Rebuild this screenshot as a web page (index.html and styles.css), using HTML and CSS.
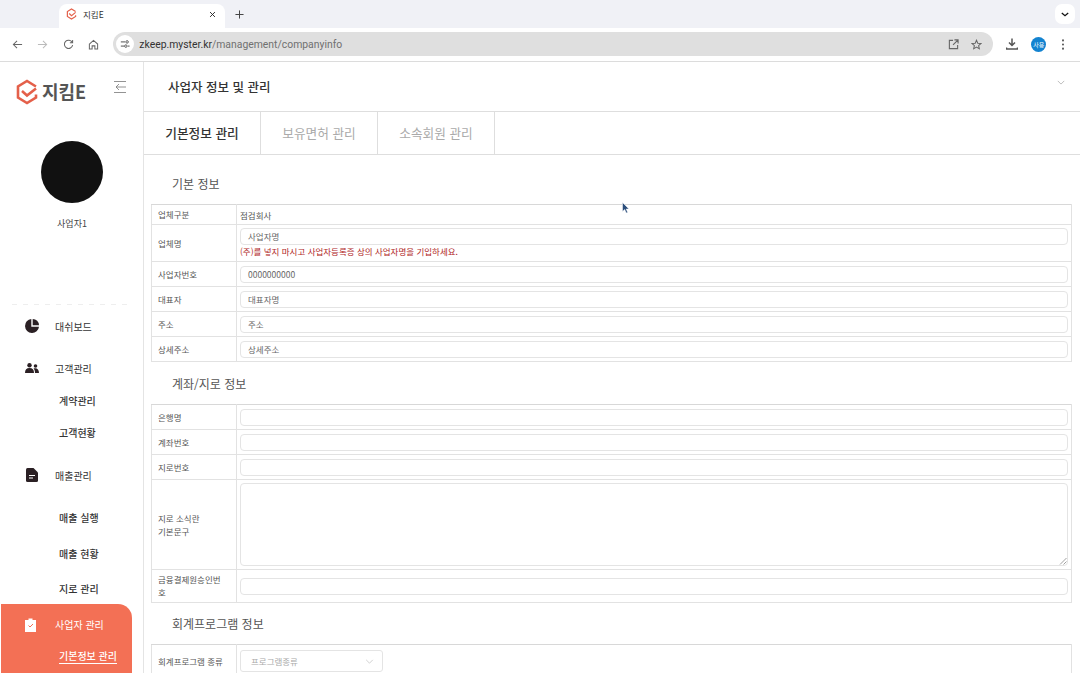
FILE: index.html
```html
<!DOCTYPE html>
<html lang="ko">
<head>
    <meta charset="UTF-8">
    <title>지킴E</title>
    <link rel="stylesheet" href="styles.css">
</head>
<body>
    <div class="tabstrip">
        <div class="tab">
            <svg class="tab-logo" viewBox="0 0 24 26"><path d="M21 7.500 12 2 3 7.500v11L12 24l9-5.500v-3" fill="none" stroke="#e4604a" stroke-width="2.600"/><path d="M7 12l5 4.500 9-7" fill="none" stroke="#e4604a" stroke-width="2.600"/></svg>
            <span class="tab-title">지킴E</span>
            <svg class="tab-close" viewBox="0 0 10 10"><path d="M1.500 1.500l7 7M8.500 1.500l-7 7" stroke="#222" stroke-width="1.300"/></svg>
        </div>
        <svg class="tab-new" viewBox="0 0 10 10"><path d="M5 .5v9M.5 5h9" stroke="#444" stroke-width="1.100"/></svg>
        <div class="tab-search">
            <svg viewBox="0 0 10 6" width="8" height="5"><path d="M1 1l4 3.500L9 1" fill="none" stroke="#111" stroke-width="1.600"/></svg>
        </div>
    </div>

    <div class="toolbar">
        <svg class="nav-icon" viewBox="0 0 12 12"><path d="M11 6H1.500M5.500 2 1.500 6l4 4" fill="none" stroke="#666" stroke-width="1.100"/></svg>
        <svg class="nav-icon" viewBox="0 0 12 12"><path d="M1 6h9.500M6.500 2l4 4-4 4" fill="none" stroke="#bbb" stroke-width="1.100"/></svg>
        <svg class="nav-icon" viewBox="0 0 12 12"><path d="M10 3.600A4.500 4.500 0 1 0 10.500 6.500M10.500 1v3h-3" fill="none" stroke="#666" stroke-width="1.100"/></svg>
        <svg class="nav-icon" viewBox="0 0 12 12"><path d="M1.500 5.500 6 1.500l4.500 4v5.500H7.500V7.500h-3V11H1.500z" fill="none" stroke="#666" stroke-width="1.100"/></svg>
        <div class="omnibox">
            <span class="site-btn">
                <svg viewBox="0 0 12 12" width="10" height="10"><path d="M1 3.500h5M9.500 8.500h2M1 8.500h4" stroke="#444" stroke-width="1.100"/><circle cx="8.500" cy="3.500" r="1.500" fill="none" stroke="#444"/><circle cx="7" cy="8.500" r="1.500" fill="none" stroke="#444"/></svg>
            </span>
            <span class="url"><b>zkeep.myster.kr</b>/management/companyinfo</span>
            <svg class="omni-icon" viewBox="0 0 12 12"><path d="M5.500 1.500H1.500v9h9V6.500M7 1h4v4M11 1 5.500 6.500" fill="none" stroke="#666" stroke-width="1.200"/></svg>
            <svg class="omni-icon" viewBox="0 0 12 12"><path d="M6 1.300 7.400 4.600l3.600.3-2.700 2.300.8 3.500L6 8.800l-3.100 1.900.8-3.500L1 4.900l3.600-.3z" fill="none" stroke="#666" stroke-width="1.100"/></svg>
        </div>
        <svg class="tool-icon" viewBox="0 0 12 12"><path d="M6 .5v6.500M3 4.500 6 7.500l3-3" fill="none" stroke="#555" stroke-width="1.500"/><path d="M.5 9.500v1.500h11V9.500" fill="none" stroke="#555" stroke-width="1.500"/></svg>
        <span class="profile">사용</span>
        <svg class="tool-dots" viewBox="0 0 4 12"><circle cx="2" cy="1.500" r="1.100" fill="#555"/><circle cx="2" cy="6" r="1.100" fill="#555"/><circle cx="2" cy="10.500" r="1.100" fill="#555"/></svg>
    </div>

    <div class="app">
        <aside class="sidebar">
            <div class="brand">
                <svg class="brand-mark" viewBox="0 0 24 26"><path d="M21 7.500 12 2 3 7.500v11L12 24l9-5.500v-3" fill="none" stroke="#e4604a" stroke-width="2.600"/><path d="M7 12l5 4.500 9-7" fill="none" stroke="#e4604a" stroke-width="2.600"/></svg>
                <span class="brand-name">지킴E</span>
                <svg class="collapse" viewBox="0 0 12 12"><path d="M0 .5h12M0 11.500h12M12 6H2M5 3 2 6l3 3" fill="none" stroke="#777" stroke-width=".8"/></svg>
            </div>
            <div class="avatar"></div>
            <div class="user-name">사업자1</div>
            <nav class="menu">
                <a class="menu-item">
                    <svg class="menu-icon" viewBox="0 0 14 14"><path d="M6.300 0v7.700h7.700A7 7 0 1 1 6.300 0zM7.700 0A6.300 6.300 0 0 1 14 6.300H7.700z" fill="#2b2024"/></svg>
                    대쉬보드
                </a>
                <a class="menu-item menu-customers">
                    <svg class="menu-icon" viewBox="0 0 14 10"><circle cx="4.500" cy="2.300" r="2.200" fill="#2b2024"/><circle cx="10.500" cy="3" r="1.800" fill="#2b2024"/><path d="M0 10c0-3.500 1.500-5 4.500-5s4.500 1.500 4.500 5zM10 10c0-2-.4-3.500-1.500-4.500 3-1 5.500.5 5.500 4.500z" fill="#2b2024"/></svg>
                    고객관리
                </a>
                <a class="sub-item">계약관리</a>
                <a class="sub-item">고객현황</a>
                <a class="menu-item menu-sales">
                    <svg class="menu-icon" viewBox="0 0 12 14"><path d="M0 1.500Q0 0 1.500 0H7.500L12 4.500V12.500Q12 14 10.500 14H1.500Q0 14 0 12.500z" fill="#2b2024"/><path d="M3 7.500h6M3 10h4" stroke="#fff" stroke-width="1"/></svg>
                    매출관리
                </a>
                <a class="sub-item wide">매출 실행</a>
                <a class="sub-item wide">매출 현황</a>
                <a class="sub-item wide">지로 관리</a>
                <div class="menu-active">
                    <a class="menu-item">
                        <svg class="menu-icon" viewBox="0 0 11 14"><path d="M0 2h3.500V.500h4V2H11v12H0z" fill="#fff"/><path d="M3.500 7.500 5 9l3-3" fill="none" stroke="#f37055" stroke-width="1"/></svg>
                        사업자 관리
                    </a>
                    <a class="sub-item current"><span>기본정보 관리</span></a>
                </div>
            </nav>
        </aside>

        <main class="content">
            <header class="page-head">
                <h1>사업자 정보 및 관리</h1>
                <svg class="head-toggle" viewBox="0 0 10 6"><path d="M1 1l4 4 4-4" fill="none" stroke="#999" stroke-width=".8"/></svg>
            </header>
            <div class="tabs">
                <div class="tabs-item active">기본정보 관리</div>
                <div class="tabs-item">보유면허 관리</div>
                <div class="tabs-item">소속회원 관리</div>
            </div>

            <section class="form-area">
                <h2>기본 정보</h2>
                <table class="info">
                    <tr class="h20"><th>업체구분</th><td>점검회사</td></tr>
                    <tr class="h37">
                        <th>업체명</th>
                        <td class="name-cell">
                            <div class="field">사업자명</div>
                            <p class="notice">(주)를 넣지 마시고 사업자등록증 상의 사업자명을 기입하세요.</p>
                        </td>
                    </tr>
                    <tr><th>사업자번호</th><td><div class="field">0000000000</div></td></tr>
                    <tr><th>대표자</th><td><div class="field">대표자명</div></td></tr>
                    <tr><th>주소</th><td><div class="field">주소</div></td></tr>
                    <tr><th>상세주소</th><td><div class="field">상세주소</div></td></tr>
                </table>

                <h2 class="title-mid">계좌/지로 정보</h2>
                <table class="info">
                    <tr><th>은행명</th><td><div class="field"></div></td></tr>
                    <tr><th>계좌번호</th><td><div class="field"></div></td></tr>
                    <tr><th>지로번호</th><td><div class="field"></div></td></tr>
                    <tr class="h90">
                        <th>지로 소식란<br>기본문구</th>
                        <td>
                            <div class="field area">
                                <svg class="grip" viewBox="0 0 8 8"><path d="M7.500 1 1 7.500M7.500 4.500 4.500 7.500" stroke="#888" stroke-width=".8"/></svg>
                            </div>
                        </td>
                    </tr>
                    <tr class="h33"><th>금융결제원승인번호</th><td><div class="field"></div></td></tr>
                </table>

                <h2 class="title-last">회계프로그램 정보</h2>
                <table class="info">
                    <tr class="h33">
                        <th>회계프로그램 종류</th>
                        <td>
                            <div class="select">
                                프로그램종류
                                <svg viewBox="0 0 10 6" width="9" height="5"><path d="M1 1l4 4 4-4" fill="none" stroke="#bbb" stroke-width=".8"/></svg>
                            </div>
                        </td>
                    </tr>
                </table>
            </section>
        </main>
    </div>

    <svg class="cursor" viewBox="0 0 8 12"><path d="M.5.500v9l2.200-2 1.500 3.500 1.500-.6L4.200 7H7z" fill="#2c4f7c" stroke="#fff" stroke-width=".5"/></svg>
</body>
</html>
```

FILE: styles.css
```css
* {
    box-sizing: border-box;
}

html, body {
    margin: 0;
    padding: 0;
    height: 100%;
    overflow: hidden;
}

body {
    display: flex;
    flex-direction: column;
    font-family: "Noto Sans CJK KR", "Noto Sans", sans-serif;
    color: #333;
    background-color: #fff;
}

/* Browser window */
.tabstrip {
    height: 28px;
    flex: none;
    display: flex;
    align-items: flex-end;
    background-color: #f0f1f6;
    padding-left: 59px;
}

.tab {
    width: 166px;
    height: 24px;
    display: flex;
    align-items: center;
    padding: 0 17px 4px 7px;
    background-color: #fff;
    border-radius: 8px 8px 0 0;
}

.tab-logo {
    width: 11px;
    height: 12px;
}

.tab-title {
    margin-left: 6px;
    font-size: 8.500px;
    color: #333;
    flex: 1;
}

.tab-close {
    width: 7px;
    height: 7px;
    margin-right: -8px;
}

.tab-new {
    width: 9px;
    height: 9px;
    margin: 0 0 9px 10px;
}

.tab-search {
    margin: 0 5px 4px auto;
    width: 20px;
    height: 20px;
    display: flex;
    align-items: center;
    justify-content: center;
    background-color: #fff;
    border-radius: 7px;
}

.toolbar {
    height: 34px;
    flex: none;
    display: flex;
    align-items: center;
    background-color: #fff;
    border-bottom: 1px solid #dcdcdc;
    border-radius: 8px 8px 0 0;
    padding: 0 0 1px 12px;
}

.nav-icon {
    width: 11px;
    height: 11px;
    margin-right: 14.330px;
}

.omnibox {
    width: 880px;
    height: 24px;
    display: flex;
    align-items: center;
    background-color: #dfdfdf;
    border-radius: 12px;
    padding: 0 11px 0 3px;
}

.site-btn {
    width: 18px;
    height: 18px;
    display: flex;
    align-items: center;
    justify-content: center;
    background-color: #fff;
    border-radius: 50%;
}

.url {
    flex: 1;
    margin-left: 5px;
    font-family: "Roboto", sans-serif;
    font-size: 10.400px;
    color: #707070;
}

.url b {
    font-weight: 400;
    color: #333;
}

.omni-icon {
    width: 11px;
    height: 11px;
    margin-left: 12px;
}

.tool-icon {
    width: 12px;
    height: 12px;
    margin-left: 13px;
}

.profile {
    width: 15px;
    height: 15px;
    margin-left: 13px;
    display: flex;
    align-items: center;
    justify-content: center;
    background-color: #1383d0;
    border-radius: 50%;
    color: #fff;
    font-size: 6px;
}

.tool-dots {
    width: 4px;
    height: 11px;
    margin-left: 15px;
}

/* App */
.app {
    flex: 1;
    min-height: 0;
    display: flex;
}

.sidebar {
    width: 144px;
    flex: none;
    border-right: 1px solid #e4e4e4;
    overflow: hidden;
}

.brand {
    height: 79px;
    display: flex;
    align-items: flex-start;
    padding: 17px 0 0 15px;
}

.brand-mark {
    width: 24px;
    height: 26px;
}

.brand-name {
    margin-left: 3px;
    font-size: 18px;
    line-height: 25px;
    font-weight: 700;
    color: #555;
}

.collapse {
    width: 12px;
    height: 12px;
    margin: 2px 0 0 28px;
}

.avatar {
    width: 62px;
    height: 62px;
    margin-left: 41px;
    background-color: #111;
    border-radius: 50%;
}

.user-name {
    margin-top: 11px;
    width: 144px;
    text-align: center;
    font-size: 9px;
    line-height: 20px;
    color: #444;
}

.menu {
    margin: 70px 11px 0 12px;
    padding-top: 6px;
    background-image: linear-gradient(to right, #eee 50%, transparent 50%);
    background-size: 11px 1px;
    background-repeat: repeat-x;
    background-position: 0 0;
}

.menu-item {
    height: 32px;
    display: flex;
    align-items: center;
    margin-left: -12px;
    padding-left: 25px;
    font-size: 10px;
    color: #333;
}

.menu-customers {
    margin-top: 10px;
}

.menu-sales {
    margin-top: 11px;
}

.menu-icon {
    width: 14px;
    height: 14px;
    margin-right: 16px;
}

.sub-item {
    height: 32px;
    display: flex;
    align-items: center;
    margin-left: -12px;
    padding-left: 59px;
    font-size: 10px;
    font-weight: 500;
    color: #333;
}

.sub-item.wide {
    height: 35.500px;
}

.menu-sales + .sub-item.wide {
    margin-top: 9px;
}

.menu-active {
    height: 69px;
    margin: -3px 0 0 -11px;
    width: 131px;
    background-color: #f37055;
    border-radius: 0 14px 0 0;
    padding-top: 5px;
}

.menu-active .menu-item {
    margin-left: 0;
    padding-left: 24px;
    color: #fff;
}

.menu-active .menu-icon {
    width: 11px;
    margin-right: 19px;
}

.sub-item.current {
    margin: 0;
    padding-left: 58px;
    color: #fff;
}

.sub-item.current span {
    border-bottom: 1px solid #fff;
    line-height: 14px;
}

/* Content */
.content {
    flex: 1;
    min-width: 0;
    overflow: hidden;
}

.page-head {
    height: 50px;
    display: flex;
    align-items: center;
    justify-content: space-between;
    padding: 0 15px 0 24px;
    border-bottom: 1px solid #dedede;
}

.page-head h1 {
    margin: 0;
    font-size: 12.500px;
    font-weight: 500;
    color: #333;
}

.head-toggle {
    width: 8px;
    height: 5px;
    margin-bottom: 8px;
}

.tabs {
    height: 43px;
    display: flex;
    border-bottom: 1px solid #dedede;
}

.tabs-item {
    width: 117px;
    display: flex;
    align-items: center;
    justify-content: center;
    padding-bottom: 1px;
    border-right: 1px solid #dedede;
    font-size: 12.700px;
    color: #aaa;
}

.tabs-item.active {
    font-weight: 500;
    color: #333;
}

.form-area {
    padding: 0 8px 0 7px;
}

.form-area h2 {
    margin: 0;
    height: 49px;
    padding: 18px 0 0 21px;
    font-size: 12px;
    line-height: 22px;
    font-weight: 400;
    color: #555;
}

.form-area h2.title-mid {
    height: 42px;
    padding-top: 11px;
}

.form-area h2.title-last {
    height: 41px;
    padding-top: 10px;
}

.info {
    width: 921px;
    border-collapse: collapse;
    table-layout: fixed;
    font-size: 8.500px;
    color: #555;
}

.info tr {
    height: 25px;
}

.info tr.h20 {
    height: 20px;
}

.info tr.h37 {
    height: 37px;
}

.info tr.h90 {
    height: 90px;
}

.info tr.h33 {
    height: 33px;
}

.info th, .info td {
    border: 1px solid #e2e2e2;
    padding: 0 3px;
    font-weight: 400;
    text-align: left;
}

.info tr:first-child th, .info tr:first-child td {
    border-top-color: #d8d8d8;
}

.info th {
    width: 85px;
    padding: 0 10px 0 6px;
    line-height: 13px;
}

.info td.name-cell {
    vertical-align: top;
    padding-top: 3px;
}

.field {
    height: 17px;
    padding-left: 7px;
    line-height: 15px;
    background-color: #fff;
    border: 1px solid #e4e4e4;
    border-radius: 4px;
    color: #666;
}

.field.area {
    height: 83px;
    position: relative;
}

.grip {
    position: absolute;
    right: 0;
    bottom: 0;
    width: 8px;
    height: 8px;
}

.notice {
    margin: 1px 0 0;
    font-size: 8.500px;
    line-height: 11px;
    color: #b01e1e;
}

.select {
    width: 143px;
    height: 22px;
    display: flex;
    align-items: center;
    justify-content: space-between;
    padding: 0 8px 0 10px;
    border: 1px solid #e4e4e4;
    border-radius: 3px;
    color: #aaa;
}

.cursor {
    position: absolute;
    left: 622px;
    top: 202px;
    width: 8px;
    height: 12px;
}
```
